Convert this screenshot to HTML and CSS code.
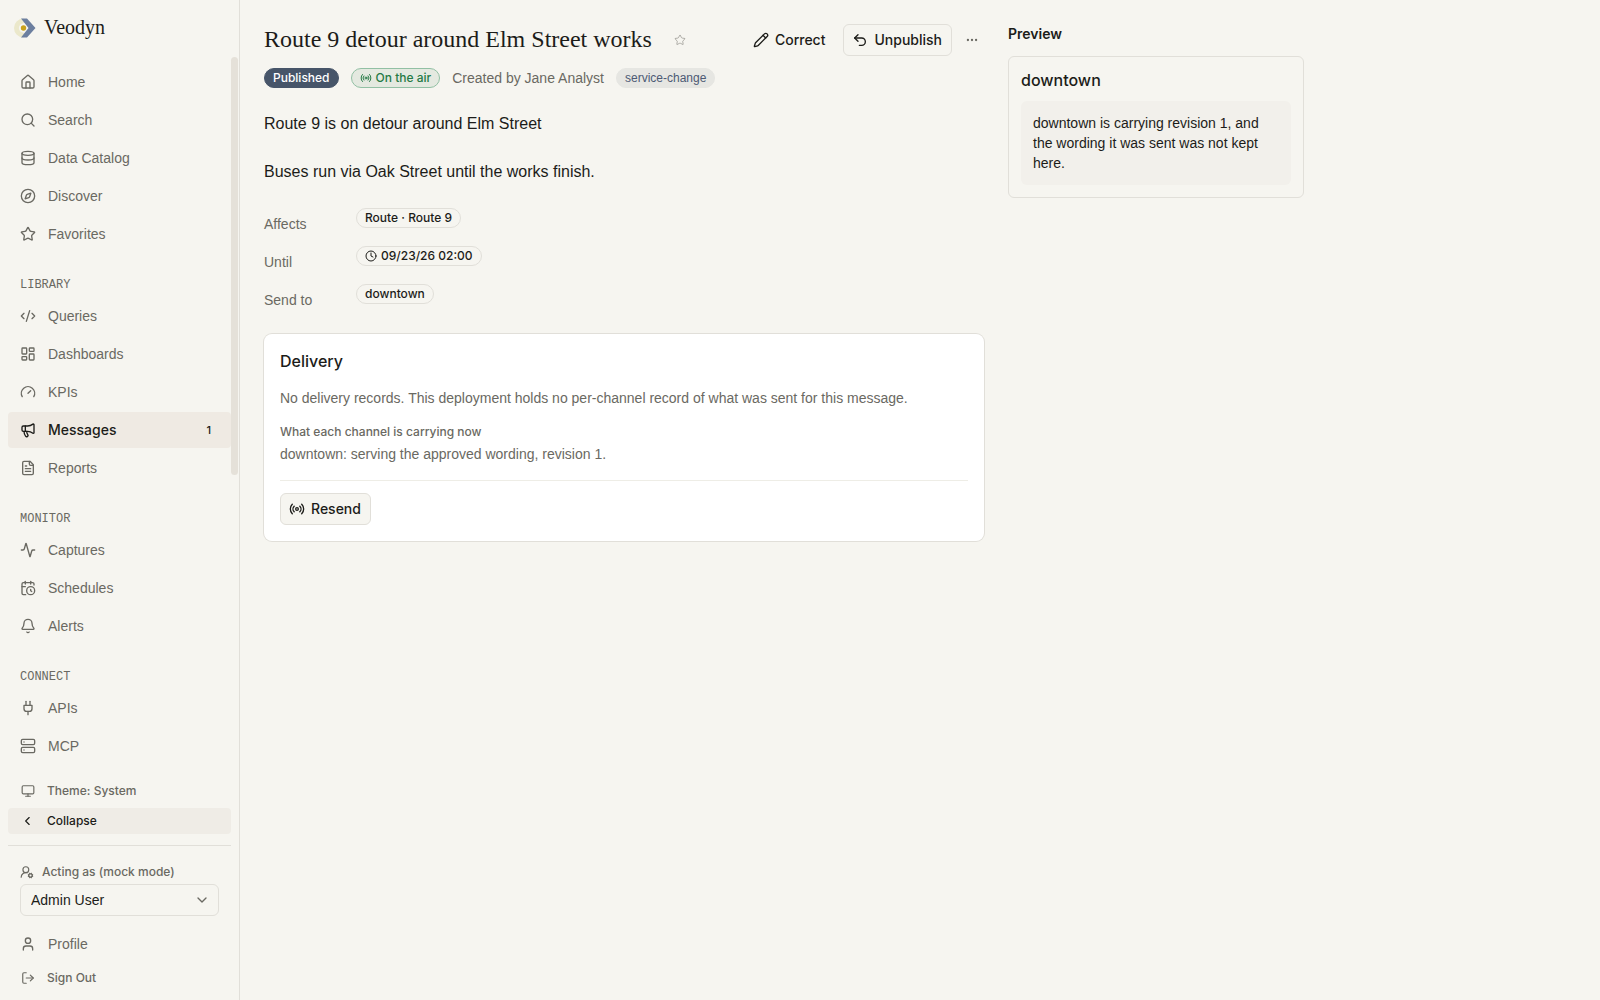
FILE: index.html
```html
<!DOCTYPE html>
<html lang="en">
<head>
<meta charset="utf-8">
<meta name="viewport" content="width=device-width, initial-scale=1">
<title>Route 9 detour around Elm Street works · Veodyn</title>
<link rel="stylesheet" href="styles.css">
</head>
<body>
<div class="app">
  <aside class="sidebar">
    <a class="brand" href="#">
      <svg class="brand-mark" viewBox="0 0 22 20" aria-hidden="true">
        <path d="M9.500 0.500A9.500 9.500 0 0 0 9.500 19.500L12 16A6.200 6.200 0 0 1 12 4Z" fill="#ebe8cb"/>
        <circle cx="9.500" cy="10" r="4.600" fill="#f6f5f0"/>
        <path d="M7 .5h6L21.500 10 13 19.500H7L14.500 10Z" fill="#6c7f9f"/>
        <circle cx="9.500" cy="10" r="2.700" fill="#c9a21b"/>
      </svg>
      <span>Veodyn</span>
    </a>
    <div class="nav-area">
      <nav class="nav" aria-label="Main">
        <ul class="nav-list">
          <li><a class="nav-item" href="#"><svg class="icon" viewBox="0 0 24 24"><path d="M15 21v-8a1 1 0 0 0-1-1h-4a1 1 0 0 0-1 1v8"/><path d="M3 10a2 2 0 0 1 .709-1.528l7-6a2 2 0 0 1 2.582 0l7 6A2 2 0 0 1 21 10v9a2 2 0 0 1-2 2H5a2 2 0 0 1-2-2z"/></svg>Home</a></li>
          <li><a class="nav-item" href="#"><svg class="icon" viewBox="0 0 24 24"><circle cx="11" cy="11" r="8"/><path d="m21 21-4.300-4.300"/></svg>Search</a></li>
          <li><a class="nav-item" href="#"><svg class="icon" viewBox="0 0 24 24"><ellipse cx="12" cy="5" rx="9" ry="3"/><path d="M3 5v14a9 3 0 0 0 18 0V5"/><path d="M3 12a9 3 0 0 0 18 0"/></svg>Data Catalog</a></li>
          <li><a class="nav-item" href="#"><svg class="icon" viewBox="0 0 24 24"><circle cx="12" cy="12" r="10"/><path d="m16.240 7.760-1.804 5.411a2 2 0 0 1-1.265 1.265L7.760 16.240l1.804-5.411a2 2 0 0 1 1.265-1.265z"/></svg>Discover</a></li>
          <li><a class="nav-item" href="#"><svg class="icon" viewBox="0 0 24 24"><path d="M11.525 2.295a.53.53 0 0 1 .95 0l2.310 4.679a2.123 2.123 0 0 0 1.595 1.160l5.166.756a.53.53 0 0 1 .294.904l-3.736 3.638a2.123 2.123 0 0 0-.611 1.878l.882 5.140a.53.53 0 0 1-.771.560l-4.618-2.428a2.122 2.122 0 0 0-1.973 0L6.396 21.010a.53.53 0 0 1-.770-.560l.881-5.139a2.122 2.122 0 0 0-.611-1.879L2.160 9.795a.53.53 0 0 1 .294-.906l5.165-.755a2.122 2.122 0 0 0 1.597-1.160z"/></svg>Favorites</a></li>
        </ul>
        <h2 class="nav-heading">LIBRARY</h2>
        <ul class="nav-list">
          <li><a class="nav-item" href="#"><svg class="icon" viewBox="0 0 24 24"><path d="m18 16 4-4-4-4"/><path d="m6 8-4 4 4 4"/><path d="m14.500 4-5 16"/></svg>Queries</a></li>
          <li><a class="nav-item" href="#"><svg class="icon" viewBox="0 0 24 24"><rect width="7" height="9" x="3" y="3" rx="1"/><rect width="7" height="5" x="14" y="3" rx="1"/><rect width="7" height="9" x="14" y="12" rx="1"/><rect width="7" height="5" x="3" y="16" rx="1"/></svg>Dashboards</a></li>
          <li><a class="nav-item" href="#"><svg class="icon" viewBox="0 0 24 24"><path d="m12 14 4-4"/><path d="M3.340 19a10 10 0 1 1 17.320 0"/></svg>KPIs</a></li>
          <li><a class="nav-item is-active" href="#" aria-current="page"><svg class="icon" viewBox="0 0 24 24"><path d="M11 6a13 13 0 0 0 8.400-2.800A1 1 0 0 1 21 4v12a1 1 0 0 1-1.600.800A13 13 0 0 0 11 14H5a2 2 0 0 1-2-2V8a2 2 0 0 1 2-2z"/><path d="M6 14a12 12 0 0 0 2.400 7.200 2 2 0 0 0 3.200-2.400A8 8 0 0 1 10 14"/><path d="M8 6v8"/></svg>Messages<span class="nav-count">1</span></a></li>
          <li><a class="nav-item" href="#"><svg class="icon" viewBox="0 0 24 24"><path d="M15 2H6a2 2 0 0 0-2 2v16a2 2 0 0 0 2 2h12a2 2 0 0 0 2-2V7Z"/><path d="M14 2v4a2 2 0 0 0 2 2h4"/><path d="M10 9H8"/><path d="M16 13H8"/><path d="M16 17H8"/></svg>Reports</a></li>
        </ul>
        <h2 class="nav-heading">MONITOR</h2>
        <ul class="nav-list">
          <li><a class="nav-item" href="#"><svg class="icon" viewBox="0 0 24 24"><path d="M22 12h-2.480a2 2 0 0 0-1.930 1.460l-2.350 8.360a.25.25 0 0 1-.480 0L9.240 2.180a.25.25 0 0 0-.480 0l-2.350 8.360A2 2 0 0 1 4.490 12H2"/></svg>Captures</a></li>
          <li><a class="nav-item" href="#"><svg class="icon" viewBox="0 0 24 24"><path d="M16 14v2.200l1.600 1"/><path d="M16 2v4"/><path d="M21 7.500V6a2 2 0 0 0-2-2H5a2 2 0 0 0-2 2v14a2 2 0 0 0 2 2h3.500"/><path d="M3 10h5"/><path d="M8 2v4"/><circle cx="16" cy="16" r="6"/></svg>Schedules</a></li>
          <li><a class="nav-item" href="#"><svg class="icon" viewBox="0 0 24 24"><path d="M10.268 21a2 2 0 0 0 3.464 0"/><path d="M3.262 15.326A1 1 0 0 0 4 17h16a1 1 0 0 0 .740-1.673C19.410 13.956 18 12.499 18 8A6 6 0 0 0 6 8c0 4.499-1.411 5.956-2.738 7.326"/></svg>Alerts</a></li>
        </ul>
        <h2 class="nav-heading">CONNECT</h2>
        <ul class="nav-list">
          <li><a class="nav-item" href="#"><svg class="icon" viewBox="0 0 24 24"><path d="M12 22v-5"/><path d="M9 8V2"/><path d="M15 8V2"/><path d="M18 8v5a4 4 0 0 1-4 4h-4a4 4 0 0 1-4-4V8Z"/></svg>APIs</a></li>
          <li><a class="nav-item" href="#"><svg class="icon" viewBox="0 0 24 24"><rect width="20" height="8" x="2" y="2" rx="2"/><rect width="20" height="8" x="2" y="14" rx="2"/><path d="M6 6h.01"/><path d="M6 18h.01"/></svg>MCP</a></li>
        </ul>
      </nav>
      <span class="scroll-thumb" aria-hidden="true"></span>
    </div>
    <div class="sidebar-foot">
      <button class="foot-button" type="button"><svg class="icon icon-sm" viewBox="0 0 24 24"><rect width="20" height="14" x="2" y="3" rx="2"/><path d="M8 21h8"/><path d="M12 17v4"/></svg>Theme: System</button>
      <button class="foot-button is-shaded" type="button"><svg class="icon icon-sm" viewBox="0 0 24 24"><path d="m14 18-6-6 6-6"/></svg>Collapse</button>
      <div class="account">
        <label class="acting-label" for="acting-as"><svg class="icon icon-sm" viewBox="0 0 24 24"><path d="M2 21a8 8 0 0 1 10.434-7.620"/><circle cx="10" cy="8" r="5"/><circle cx="18" cy="18" r="3"/><path d="m19.500 14.300-.400.900M16.900 20.800l-.300.900M21.700 19.400l-.900-.300M15.200 16.900l-.900-.300M21.700 16.600l-.900.300M15.200 19.100l-.900.300M19.500 21.700l-.400-.900M16.900 15.200l-.400-.900"/></svg>Acting as (mock mode)</label>
        <div class="select-wrap">
          <select id="acting-as" class="select"><option>Admin User</option></select>
          <svg class="icon select-chevron" viewBox="0 0 24 24"><path d="m6 9 6 6 6-6"/></svg>
        </div>
        <a class="nav-item" href="#"><svg class="icon" viewBox="0 0 24 24"><path d="M19 21v-2a4 4 0 0 0-4-4H9a4 4 0 0 0-4 4v2"/><circle cx="12" cy="7" r="4"/></svg>Profile</a>
        <button class="foot-button is-last" type="button"><svg class="icon icon-sm" viewBox="0 0 24 24"><path d="m16 17 5-5-5-5"/><path d="M21 12H9"/><path d="M9 21H5a2 2 0 0 1-2-2V5a2 2 0 0 1 2-2h4"/></svg>Sign Out</button>
      </div>
    </div>
  </aside>

  <main class="page">
    <article class="message">
      <header class="message-head">
        <h1 class="title">Route 9 detour around Elm Street works</h1>
        <button class="star-button" type="button" aria-label="Add to favorites"><svg class="icon icon-xs" viewBox="0 0 24 24"><path d="M11.525 2.295a.53.53 0 0 1 .95 0l2.310 4.679a2.123 2.123 0 0 0 1.595 1.160l5.166.756a.53.53 0 0 1 .294.904l-3.736 3.638a2.123 2.123 0 0 0-.611 1.878l.882 5.140a.53.53 0 0 1-.771.560l-4.618-2.428a2.122 2.122 0 0 0-1.973 0L6.396 21.010a.53.53 0 0 1-.770-.560l.881-5.139a2.122 2.122 0 0 0-.611-1.879L2.160 9.795a.53.53 0 0 1 .294-.906l5.165-.755a2.122 2.122 0 0 0 1.597-1.160z"/></svg></button>
        <div class="actions">
          <button class="button is-ghost" type="button"><svg class="icon" viewBox="0 0 24 24"><path d="M21.174 6.812a1 1 0 0 0-3.986-3.987L3.842 16.174a2 2 0 0 0-.500.830l-1.321 4.352a.5.5 0 0 0 .623.622l4.353-1.320a2 2 0 0 0 .830-.497z"/><path d="m15 5 4 4"/></svg>Correct</button>
          <button class="button" type="button"><svg class="icon" viewBox="0 0 24 24"><path d="M9 14 4 9l5-5"/><path d="M4 9h10.500a5.500 5.500 0 0 1 5.500 5.500a5.500 5.500 0 0 1-5.500 5.500H11"/></svg>Unpublish</button>
          <button class="more-button" type="button" aria-label="More actions"><svg class="icon icon-sm" viewBox="0 0 24 24"><circle cx="12" cy="12" r="1"/><circle cx="19" cy="12" r="1"/><circle cx="5" cy="12" r="1"/></svg></button>
        </div>
      </header>
      <div class="meta">
        <span class="badge is-published">Published</span>
        <span class="badge is-live"><svg class="icon icon-xs" viewBox="0 0 24 24"><path d="M16.247 7.761a6 6 0 0 1 0 8.478"/><path d="M19.075 4.933a10 10 0 0 1 0 14.134"/><path d="M4.925 19.067a10 10 0 0 1 0-14.134"/><path d="M7.753 16.239a6 6 0 0 1 0-8.478"/><circle cx="12" cy="12" r="2"/></svg>On the air</span>
        <span class="byline">Created by Jane Analyst</span>
        <span class="badge is-tag">service-change</span>
      </div>
      <div class="body-text">
        <p>Route 9 is on detour around Elm Street</p>
        <p>Buses run via Oak Street until the works finish.</p>
      </div>
      <dl class="facts">
        <dt>Affects</dt><dd><span class="badge">Route · Route 9</span></dd>
        <dt>Until</dt><dd><span class="badge"><svg class="icon icon-xs" viewBox="0 0 24 24"><circle cx="12" cy="12" r="10"/><path d="M12 6v6l4 2"/></svg>09/23/26 02:00</span></dd>
        <dt>Send to</dt><dd><span class="badge">downtown</span></dd>
      </dl>
      <section class="delivery">
        <h2 class="card-title">Delivery</h2>
        <p class="delivery-note">No delivery records. This deployment holds no per-channel record of what was sent for this message.</p>
        <h3 class="delivery-label">What each channel is carrying now</h3>
        <p>downtown: serving the approved wording, revision 1.</p>
        <div class="delivery-actions">
          <button class="button" type="button"><svg class="icon" viewBox="0 0 24 24"><path d="M16.247 7.761a6 6 0 0 1 0 8.478"/><path d="M19.075 4.933a10 10 0 0 1 0 14.134"/><path d="M4.925 19.067a10 10 0 0 1 0-14.134"/><path d="M7.753 16.239a6 6 0 0 1 0-8.478"/><circle cx="12" cy="12" r="2"/></svg>Resend</button>
        </div>
      </section>
    </article>
    <aside class="preview">
      <h2 class="preview-title">Preview</h2>
      <section class="preview-card">
        <h3 class="card-title">downtown</h3>
        <p class="preview-text">downtown is carrying revision 1, and the wording it was sent was not kept here.</p>
      </section>
    </aside>
  </main>
</div>
</body>
</html>
```
FILE: styles.css
```css
:root {
  --bg: #f6f5f0;
  --ink: #1c1c19;
  --muted: #6a6962;
  --line: #e1dfd9;
  --text: "Liberation Sans", Arial, sans-serif;
  --sans: Inter, "Liberation Sans", sans-serif;
  --serif: "Liberation Serif", serif;
  --mono: "Liberation Mono", monospace;
}

* { box-sizing: border-box; }

body, h1, h2, h3, p, ul, dl, dd { margin: 0; }

body {
  background: var(--bg);
  color: var(--ink);
  font: 14px/20px var(--text);
}

ul { padding: 0; list-style: none; }
a { color: inherit; text-decoration: none; }

button, select {
  margin: 0;
  font: inherit;
  color: inherit;
  background: none;
  border: 0;
}

button { cursor: pointer; }

.icon {
  flex: none;
  width: 16px;
  height: 16px;
  fill: none;
  stroke: currentColor;
  stroke-width: 2;
  stroke-linecap: round;
  stroke-linejoin: round;
}
.icon-sm { width: 14px; height: 14px; }
.icon-xs { width: 12px; height: 12px; }

.app { display: flex; min-height: 100vh; }

/* Sidebar */
.sidebar {
  position: sticky;
  top: 0;
  display: flex;
  flex: none;
  flex-direction: column;
  width: 240px;
  height: 100vh;
  border-right: 1px solid var(--line);
}

.brand {
  display: flex;
  align-items: center;
  gap: 8px;
  height: 56px;
  padding: 0 14px;
  font: 500 20px/24px var(--serif);
}
.brand span { padding-bottom: 2px; }
.brand-mark { width: 22px; height: 20px; }

.nav-area {
  position: relative;
  flex: 1;
  min-height: 0;
}
.nav {
  height: 100%;
  padding: 8px 8px 0;
  overflow: hidden;
}
.scroll-thumb {
  position: absolute;
  top: 1px;
  right: 1px;
  width: 7px;
  height: 58%;
  border-radius: 4px;
  background: #e5e1d9;
}

.nav-list { display: grid; gap: 2px; }
.nav-item {
  display: flex;
  align-items: center;
  gap: 12px;
  height: 36px;
  padding: 0 12px;
  border-radius: 4px;
  color: var(--muted);
}
.nav-item.is-active {
  background: #efeae3;
  color: var(--ink);
  font-family: var(--sans);
  font-weight: 500;
}
.nav-count {
  margin-left: auto;
  padding-right: 8px;
  font: 500 11px/16px var(--sans);
}
.nav-heading {
  padding: 25px 12px 5px;
  color: var(--muted);
  font: 12px/16px var(--mono);
}

.sidebar-foot { padding: 0 8px 8px; }
.foot-button {
  display: flex;
  align-items: center;
  gap: 12px;
  width: 100%;
  height: 28px;
  padding: 0 13px;
  border-radius: 4px;
  color: var(--muted);
  font: 500 12px/16px var(--sans);
}
.foot-button.is-shaded {
  height: 26px;
  margin-top: 3px;
  background: #efece6;
  color: var(--ink);
}
.foot-button.is-last { margin-top: 2px; }

.account {
  margin-top: 11px;
  padding-top: 16px;
  border-top: 1px solid var(--line);
}
.acting-label {
  display: flex;
  align-items: center;
  gap: 8px;
  height: 20px;
  padding: 0 12px;
  color: var(--muted);
  font: 500 12px/16px var(--sans);
}
.select-wrap {
  position: relative;
  margin: 2px 12px 10px;
}
.select {
  width: 100%;
  height: 32px;
  padding: 0 10px;
  border: 1px solid var(--line);
  border-radius: 6px;
  appearance: none;
}
.select-chevron {
  position: absolute;
  top: 8px;
  right: 9px;
  color: var(--muted);
  pointer-events: none;
}

/* Page */
.page {
  display: grid;
  flex: 1;
  grid-template-columns: minmax(0, 1fr) 296px;
  align-content: start;
  gap: 24px;
  max-width: 1088px;
  padding: 24px;
}

.message-head {
  display: flex;
  align-items: center;
  height: 32px;
}
.title {
  align-self: flex-start;
  font: 500 24px/30px var(--serif);
}
.star-button {
  display: flex;
  padding: 6px;
  margin-left: 16px;
  color: var(--muted);
}
.star-button .icon { stroke-width: 1; }
.actions {
  display: flex;
  align-items: center;
  gap: 8px;
  margin-left: auto;
}
.button {
  display: inline-flex;
  align-items: center;
  gap: 6px;
  height: 32px;
  padding: 0 9px 0 8px;
  border: 1px solid var(--line);
  border-radius: 6px;
  background: var(--bg);
  font-family: var(--sans);
  font-weight: 500;
}
.button.is-ghost { border-color: transparent; }
.more-button {
  display: flex;
  padding: 5px;
  color: var(--muted);
}

.meta {
  display: flex;
  align-items: center;
  gap: 12px;
  margin-top: 12px;
  color: var(--muted);
}
.badge {
  display: inline-flex;
  align-items: center;
  gap: 4px;
  height: 20px;
  padding: 0 8px;
  border: 1px solid var(--line);
  border-radius: 10px;
  color: var(--ink);
  font: 500 12px/16px var(--sans);
}
.badge.is-published {
  border-color: #475569;
  background: #475569;
  color: #fff;
}
.badge.is-live {
  border-color: #92c0a4;
  background: #e4e9e0;
  color: #257a45;
}
.badge.is-tag {
  border-color: #e6e6e2;
  background: #e6e6e2;
  color: #4d5a74;
  font-family: var(--text);
  font-weight: 400;
}

.body-text {
  display: grid;
  gap: 24px;
  margin-top: 24px;
  font-size: 16px;
  line-height: 24px;
}

.facts {
  display: grid;
  grid-template-columns: 80px minmax(0, 1fr);
  gap: 6px 12px;
  margin-top: 24px;
  color: var(--muted);
}
.facts dt { line-height: 32px; }
.facts dd { display: flex; align-items: flex-start; }

.delivery {
  margin-top: 18px;
  padding: 16px;
  border-radius: 8px;
  background: #fff;
  box-shadow: 0 0 0 1px var(--line);
  color: var(--muted);
}
.card-title {
  color: var(--ink);
  font: 500 16px/22px var(--sans);
}
.delivery-note { margin-top: 16px; }
.delivery-label {
  margin: 16px 0 4px;
  font: 500 12px/16px var(--sans);
}
.delivery-actions {
  margin-top: 16px;
  padding-top: 12px;
  border-top: 1px solid #eeede6;
  color: var(--ink);
}
.delivery-actions .button { vertical-align: top; }

.preview-title {
  font: 600 14px/20px var(--sans);
}
.preview-card {
  margin-top: 12px;
  padding: 12px;
  border: 1px solid var(--line);
  border-radius: 6px;
}
.preview-text {
  margin-top: 10px;
  padding: 12px;
  border-radius: 6px;
  background: #f2f0eb;
}
```
